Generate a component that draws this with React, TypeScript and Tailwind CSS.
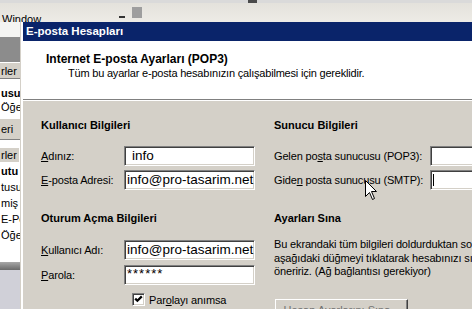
import React from "react";

const Sunken = ({ className = "", children }: { className?: string; children?: React.ReactNode }) => (
  <div
    className={
      "border border-t-[#808080] border-l-[#808080] border-r-white border-b-white shadow-[inset_1px_1px_0_#404040,inset_-1px_-1px_0_#d4d0c8] bg-white " +
      className
    }
  >
    {children}
  </div>
);

const Row = ({ label, labelW, children, className = "" }: { label: React.ReactNode; labelW: string; children: React.ReactNode; className?: string }) => (
  <div className={"flex items-center h-[20px] " + className}>
    <div className={labelW + " shrink-0 text-[11px] leading-[14px] tracking-[-0.15px] whitespace-nowrap"}>{label}</div>
    {children}
  </div>
);

export default function App() {
  return (
    <div className="w-[472px] h-[309px] overflow-hidden relative flex flex-col bg-[#d4d0c8] text-black font-['Liberation_Sans',Arial,sans-serif]">
      {/* background window top */}
      <div className="h-[22px] shrink-0 flex flex-col overflow-hidden">
        <div className="h-[3px] bg-[#dadada] flex">
          <div className="ml-[248px] w-[9px] h-[3px] bg-[#4a4a4a]" />
        </div>
        <div className="h-[1px] bg-[#2a2a2a]" />
        <div className="flex-1 flex items-start bg-gradient-to-b from-[#e4e2dc] to-[#efede8]">
          <span className="ml-[2px] mt-[10px] text-[11px] leading-[13px] whitespace-nowrap">Window</span>
          <div className="ml-[78px] mt-[13px] w-[6px] h-[2px] bg-[#333]" />
          <div className="ml-[7px] mt-[4px] w-[10px] h-[11px] bg-[#9e9e9e]" />
        </div>
      </div>

      <div className="flex flex-1 min-h-0">
        {/* left strip: background Outlook window */}
        <div className="w-[20px] shrink-0 flex flex-col overflow-hidden text-[11px] leading-[14px] whitespace-nowrap">
          <div className="h-[15px] shrink-0 bg-[#f4f4f2]" />
          <div className="h-[25px] shrink-0 bg-[#8c8c8c]" />
          <div className="h-[17px] shrink-0 bg-[#d4d0c8] border-t border-t-white border-b border-b-[#808080] flex items-center pl-[1px]">rler</div>
          <div className="h-[39px] shrink-0 bg-white flex flex-col pt-[7px] pl-[1px]">
            <b>usu</b>
            <span>Öğel</span>
          </div>
          <div className="h-[22px] shrink-0 bg-[#d4d0c8] border-t border-t-white border-b border-b-[#808080] flex items-center pl-[1px]">eri</div>
          <div className="h-[122px] shrink-0 bg-white flex flex-col pt-[7px]">
            <div className="h-[16px] flex items-center"><span className="bg-[#d4d0c8] pl-[1px] pr-[2px]">rler</span></div>
            <div className="h-[16px] flex items-center pl-[1px] font-bold">utu</div>
            <div className="h-[16px] flex items-center pl-[1px]">tusu</div>
            <div className="h-[16px] flex items-center pl-[1px]">miş Ö</div>
            <div className="h-[16px] flex items-center pl-[1px]">E-Po</div>
            <div className="h-[16px] flex items-center pl-[1px]">Öğele</div>
          </div>
          <div className="h-[8px] shrink-0 bg-gradient-to-b from-[#a8a8a8] to-[#6a6a6a]" />
          <div className="flex-1 bg-[#d0d0d8]" />
        </div>
        <div className="w-[1px] shrink-0 bg-[#d4d0c8]" />
        <div className="w-[2px] shrink-0 bg-white" />

        {/* dialog */}
        <div className="flex-1 min-w-0 flex flex-col">
          <div className="h-[19px] shrink-0 bg-[#0a246a] flex items-center pl-[3px] text-white text-[11.5px] font-bold whitespace-nowrap">
            E-posta Hesapları
          </div>
          <div className="h-[58px] shrink-0 bg-white pt-[11px] whitespace-nowrap">
            <div className="pl-[23px] text-[12px] font-bold leading-[14px]">Internet E-posta Ayarları (POP3)</div>
            <div className="pl-[45px] text-[11px] leading-[14px] tracking-[-0.2px]">
              Tüm bu ayarlar e-posta hesabınızın çalışabilmesi için gereklidir.
            </div>
          </div>
          <div className="h-[1px] shrink-0 bg-[#808080]" />
          <div className="h-[1px] shrink-0 bg-white" />

          <div className="flex-1 flex pl-[18px] pt-[17px]">
            {/* left column */}
            <div className="w-[233px] shrink-0 flex flex-col">
              <div className="text-[11px] font-bold leading-[14px] whitespace-nowrap">Kullanıcı Bilgileri</div>
              <Row className="mt-[14px]" labelW="w-[83px]" label={<><u>A</u>dınız:</>}>
                <Sunken className="w-[131px] h-[20px] flex items-center pl-[7px] text-[13.5px] leading-[16px]">info</Sunken>
              </Row>
              <Row className="mt-[4px]" labelW="w-[83px]" label={<><u>E</u>-posta Adresi:</>}>
                <Sunken className="w-[131px] h-[20px] flex items-center pl-[2px] text-[13.5px] leading-[16px] whitespace-nowrap overflow-hidden">info@pro-tasarim.net</Sunken>
              </Row>
              <div className="mt-[21px] text-[11px] font-bold leading-[14px] whitespace-nowrap">Oturum Açma Bilgileri</div>
              <Row className="mt-[15px]" labelW="w-[83px]" label={<><u>K</u>ullanıcı Adı:</>}>
                <Sunken className="w-[131px] h-[20px] flex items-center pl-[2px] text-[13.5px] leading-[16px] whitespace-nowrap overflow-hidden">info@pro-tasarim.net</Sunken>
              </Row>
              <Row className="mt-[5px]" labelW="w-[83px]" label={<><u>P</u>arola:</>}>
                <Sunken className="w-[131px] h-[20px] flex items-start pl-[2px] pt-[1px] text-[13px] leading-[14px] tracking-[1px]">******</Sunken>
              </Row>
              <div className="mt-[8px] ml-[91px] flex items-center h-[13px]">
                <Sunken className="w-[13px] h-[13px] shrink-0 flex items-center justify-center">
                  <svg width="9" height="9" viewBox="0 0 9 9">
                    <path d="M1.2 3.6 L3.4 5.8 L7.8 1.4" fill="none" stroke="#000" strokeWidth="2.2" />
                  </svg>
                </Sunken>
                <span className="ml-[4px] text-[11px] leading-[14px] tracking-[-0.15px] whitespace-nowrap">
                  Par<u>o</u>layı anımsa
                </span>
              </div>
            </div>

            {/* right column */}
            <div className="flex-1 min-w-0 flex flex-col">
              <div className="text-[11px] font-bold leading-[14px] whitespace-nowrap">Sunucu Bilgileri</div>
              <Row className="mt-[14px]" labelW="w-[156px]" label={<>Gelen po<u>s</u>ta sunucusu (POP3):</>}>
                <Sunken className="w-[80px] h-[20px] shrink-0" />
              </Row>
              <Row className="mt-[4px]" labelW="w-[156px]" label={<>Gide<u>n</u> posta sunucusu (SMTP):</>}>
                <Sunken className="w-[80px] h-[20px] shrink-0 flex items-center pl-[2px]">
                  <div className="w-[1px] h-[12px] bg-black" />
                </Sunken>
              </Row>
              <div className="mt-[21px] text-[11px] font-bold leading-[14px] whitespace-nowrap">Ayarları Sına</div>
              <div className="mt-[13px] text-[11px] leading-[13.5px] tracking-[-0.15px] whitespace-nowrap">
                <div>Bu ekrandaki tüm bilgileri doldurduktan sonra,</div>
                <div>aşağıdaki düğmeyi tıklatarak hesabınızı sınamanızı</div>
                <div>öneririz. (Ağ bağlantısı gerekiyor)</div>
              </div>
              <div className="mt-[20px] ml-[1px] w-[133px] h-[23px] shrink-0 border border-t-white border-l-white border-r-[#404040] border-b-[#404040] shadow-[inset_-1px_-1px_0_#808080] flex items-center justify-center text-[11px] text-[#707070] whitespace-nowrap">
                Hesap Ayarlarını Sına...
              </div>
            </div>
          </div>
        </div>
      </div>

      {/* mouse pointer */}
      <svg className="absolute left-[365px] top-[180px]" width="13" height="21" viewBox="0 0 13 21">
        <path d="M0.5 0.5 L0.5 16.5 L4.5 12.5 L7.5 19.5 L9.5 18.5 L6.5 11.5 L11.5 11.5 Z" fill="#fff" stroke="#000" strokeWidth="1" />
      </svg>
    </div>
  );
}
